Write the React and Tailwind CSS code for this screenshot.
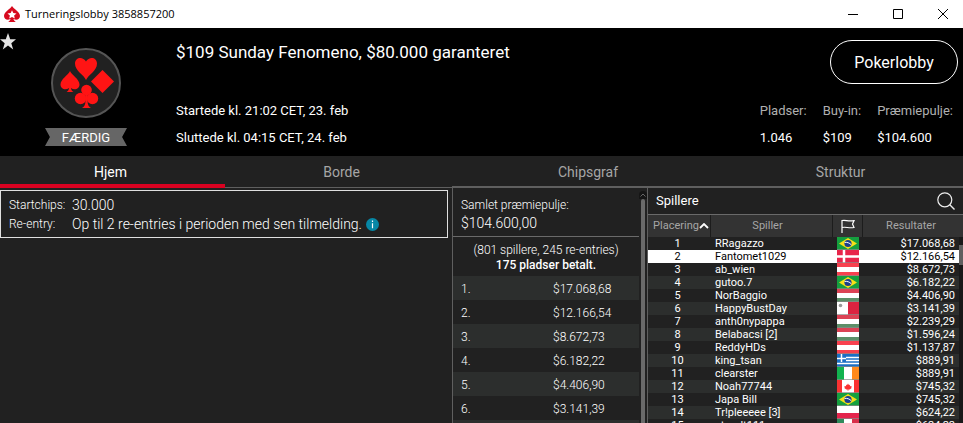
import React from 'react';

const tabs = ['Hjem', 'Borde', 'Chipsgraf', 'Struktur'];

const prizes = ['$17.068,68', '$12.166,54', '$8.672,73', '$6.182,22', '$4.406,90', '$3.141,39', '$2.239,29'];

const players = [
  { name: 'RRagazzo', flag: 'br', result: '$17.068,68' },
  { name: 'Fantomet1029', flag: 'dk', result: '$12.166,54' },
  { name: 'ab_wien', flag: 'at', result: '$8.672,73' },
  { name: 'gutoo.7', flag: 'br', result: '$6.182,22' },
  { name: 'NorBaggio', flag: 'hu', result: '$4.406,90' },
  { name: 'HappyBustDay', flag: 'mt', result: '$3.141,39' },
  { name: 'anth0nypappa', flag: 'hu', result: '$2.239,29' },
  { name: 'Belabacsi [2]', flag: 'hu', result: '$1.596,24' },
  { name: 'ReddyHDs', flag: 'at', result: '$1.137,87' },
  { name: 'king_tsan', flag: 'gr', result: '$889,91' },
  { name: 'clearster', flag: 'ie', result: '$889,91' },
  { name: 'Noah77744', flag: 'ca', result: '$745,32' },
  { name: 'Japa Bill', flag: 'br', result: '$745,32' },
  { name: 'Tr!pleeeee [3]', flag: 'pl', result: '$624,22' },
  { name: 'stroolt111', flag: 'mx', result: '$624,22' },
];

const flagArt = {
  br: (
    <>
      <rect width="22" height="13" fill="#159f3f" />
      <path d="M2 6.500 11 1l9 5.500-9 5.500z" fill="#f7e017" />
      <circle cx="11" cy="6.500" r="3.600" fill="#1c3f8c" />
      <path d="M7.600 5.400c2.600-.3 5 .5 6.700 2.400" stroke="#fff" strokeWidth="1" fill="none" />
    </>
  ),
  dk: (
    <>
      <rect width="22" height="13" fill="#e8254a" />
      <path d="M7 0v13M0 6.500h22" stroke="#fff" strokeWidth="2.500" />
    </>
  ),
  at: (
    <>
      <rect width="22" height="13" fill="#f8414f" />
      <rect y="4" width="22" height="5" fill="#fff" />
    </>
  ),
  hu: (
    <>
      <rect width="22" height="13" fill="#dc4355" />
      <rect y="4" width="22" height="5" fill="#fff" />
      <rect y="9" width="22" height="4" fill="#5c8f68" />
    </>
  ),
  mt: (
    <>
      <rect width="22" height="13" fill="#fff" />
      <rect x="11" width="11" height="13" fill="#db2340" />
      <circle cx="3.500" cy="3.500" r="1.800" fill="#999" />
    </>
  ),
  gr: (
    <>
      <rect width="22" height="13" fill="#1a6fc4" />
      <path d="M0 3.500h22M0 6.500h22M0 9.500h22" stroke="#fff" strokeWidth="1.300" />
      <rect width="9" height="8" fill="#1a6fc4" />
      <path d="M4.500 0v8M0 4.500h9" stroke="#fff" strokeWidth="1.500" />
    </>
  ),
  ie: (
    <>
      <rect width="22" height="13" fill="#fff" />
      <rect width="7" height="13" fill="#12b24f" />
      <rect x="15" width="7" height="13" fill="#ff8a1c" />
    </>
  ),
  ca: (
    <>
      <rect width="22" height="13" fill="#fff" />
      <rect width="5" height="13" fill="#fa3232" />
      <rect x="17" width="5" height="13" fill="#fa3232" />
      <path d="m11 3.500.9 1.500 1-.3v1.500l1.800-.2-.5 1.300.5.600-2 1.500h-1.300v1.300h-.800V9.400H9.300L7.300 7.900l.5-.6L7.300 6l1.800.2V4.700l1 .3z" fill="#fa3232" />
    </>
  ),
  pl: (
    <>
      <rect width="22" height="13" fill="#fff" />
      <rect y="7" width="22" height="6" fill="#e4244c" />
    </>
  ),
  mx: (
    <>
      <rect width="22" height="13" fill="#fff" />
      <rect width="7" height="13" fill="#2f8a5b" />
      <rect x="15" width="7" height="13" fill="#d8304a" />
      <circle cx="11" cy="6.500" r="2" fill="#9a7b52" />
    </>
  ),
};

const Flag = ({ code }) => (
  <svg viewBox="0 0 22 13" className="block h-[13px] w-[22px]" aria-hidden="true">
    {flagArt[code]}
    <path d="M0 12.500h22" stroke="#8a8a8a" strokeOpacity=".7" />
  </svg>
);

const TitleBar = () => (
  <div className="flex h-7 shrink-0 items-center justify-between bg-white text-black">
    <div className="flex items-center gap-[5px] pl-1">
      <svg viewBox="0 0 16 16" className="h-4 w-4" aria-hidden="true">
        <path d="M8 0C6.500 3 0 5.800 0 10c0 3.600 4 4.600 6.500 2.800-.2 1.300-.9 2.200-2.300 3.200h7.600c-1.400-1-2.100-1.900-2.300-3.200C12 14.600 16 13.600 16 10 16 5.800 9.500 3 8 0z" fill="#d70a1e" />
        <path d="m8 4.200 1.300 2.900 3.200.3-2.400 2.100.7 3.100L8 11l-2.800 1.600.7-3.100-2.400-2.100 3.200-.3z" fill="#fff" />
      </svg>
      <span className="font-['Open_Sans','Noto_Sans',sans-serif] text-[11px] leading-4">Turneringslobby 3858857200</span>
    </div>
    <div className="flex items-center gap-[5px]">
      <button aria-label="Minimer" className="flex h-7 w-10 items-center justify-center">
        <svg viewBox="0 0 10 10" className="h-2.5 w-2.5"><path d="M0 5.500h10" stroke="#000" /></svg>
      </button>
      <button aria-label="Maksimer" className="flex h-7 w-10 items-center justify-center">
        <svg viewBox="0 0 10 10" className="h-2.5 w-2.5"><path d="M.5.5h9v9h-9z" fill="none" stroke="#000" /></svg>
      </button>
      <button aria-label="Luk" className="flex h-7 w-10 items-center justify-center">
        <svg viewBox="0 0 10 10" className="h-2.5 w-2.5"><path d="m0 0 10 10M10 0 0 10" stroke="#000" /></svg>
      </button>
    </div>
  </div>
);

const Emblem = () => (
  <svg viewBox="0 0 70 70" className="h-[70px] w-[70px]" aria-hidden="true">
    <circle cx="35" cy="35" r="34" fill="#212121" stroke="#555" strokeWidth="2" />
    <g fill="#ff1414">
      <path d="M35 32C33 27 24 23 24 15.500 24 9 32 8 35 13.500 38 8 46 9 46 15.500 46 23 37 27 35 32z" />
      <path d="m51.500 22 11.500 11.500L51.500 45 40 33.500z" />
      <path d="M19 23c-1.500 4-9.500 8-9.500 13.500 0 4.500 5 6 8.500 3.500-.2 2-1 3.200-2.500 4h7c-1.500-.8-2.300-2-2.500-4 3.500 2.500 8.500 1 8.500-3.500C28.500 31 20.500 27 19 23z" />
      <circle cx="35.500" cy="42" r="5.300" />
      <circle cx="29.500" cy="50.500" r="5.700" />
      <circle cx="41.500" cy="50.500" r="5.700" />
      <path d="M34 44h3l-.5 9c.2 4 1.500 6 3.500 7h-9c2-1 3.300-3 3.500-7z" />
    </g>
  </svg>
);

const stats = [
  ['Pladser:', '1.046'],
  ['Buy-in:', '$109'],
  ['Præmiepulje:', '$104.600'],
];

const Header = () => (
  <header className="flex h-32 shrink-0 bg-black">
    <div className="flex w-44 shrink-0">
      <button aria-label="Favorit" className="mt-1 h-[18px] w-4">
        <svg viewBox="0 0 16 18" className="h-[18px] w-4">
          <path d="m8 1 2.200 6.200H16l-4.700 4 1.900 6.300L8 13.600l-5.200 3.900 1.900-6.300L0 7.200h5.800z" fill="#e4e4e4" />
        </svg>
      </button>
      <div className="flex w-[140px] flex-col items-center pt-5">
        <Emblem />
        <div className="mt-2.5 flex h-[18px] w-[82px] justify-center bg-[#666] text-[13px] leading-5 text-white [clip-path:polygon(0_0,100%_0,94%_50%,100%_100%,0_100%,6%_50%)]">
          FÆRDIG
        </div>
      </div>
    </div>
    <div className="flex flex-1 flex-col text-[13px] leading-4 text-white">
      <h1 className="mt-3 text-[17px] leading-6">$109 Sunday Fenomeno, $80.000 garanteret</h1>
      <p className="mt-[39px]">Startede kl. 21:02 CET, 23. feb</p>
      <p className="mt-[11px]">Sluttede kl. 04:15 CET, 24. feb</p>
    </div>
    <div className="flex flex-col items-end text-[13px] leading-4 text-white">
      <button className="mt-3 mr-[5px] h-11 w-32 rounded-full border border-white pt-0.5 text-base">Pokerlobby</button>
      <dl className="mt-[19px] mr-2.5 flex gap-4">
        {stats.map(([label, value]) => (
          <div key={label}>
            <dt className="text-[#b0b0b0]">{label}</dt>
            <dd className="mt-[11px]">{value}</dd>
          </div>
        ))}
      </dl>
    </div>
  </header>
);

const Tabs = () => (
  <nav className="grid h-[30px] shrink-0 grid-cols-[225fr_233fr_260fr_245fr] text-sm leading-6">
    {tabs.map((tab, i) => (
      <a
        key={tab}
        href="#"
        className={`flex items-center justify-center ${
          i === 0 ? 'border-b-4 border-[#d90221] pt-1 pr-1 text-white' : 'border-b border-[#5f5f5f] text-[#a6a6a6]'
        }`}
      >
        {tab}
      </a>
    ))}
  </nav>
);

const InfoPanel = () => (
  <section className="pt-1 pr-1">
    <dl className="grid h-12 grid-cols-[63px_1fr] content-center border border-[#e0e0e0] pt-0.5 pl-2 text-sm leading-[19px] font-light text-white">
      <dt className="text-xs leading-[19px]">Startchips:</dt>
      <dd>30.000</dd>
      <dt className="text-xs leading-[19px]">Re-entry:</dt>
      <dd className="flex items-center gap-1">
        Op til 2 re-entries i perioden med sen tilmelding.
        <svg viewBox="0 0 13 13" className="h-[13px] w-[13px]" aria-hidden="true">
          <circle cx="6.500" cy="6.500" r="6.500" fill="#0787a5" />
          <path d="M6.500 2.500v1.500M6.500 5.200v5" stroke="#fff" strokeWidth="1.200" />
        </svg>
      </dd>
    </dl>
  </section>
);

const PrizePanel = () => (
  <section className="flex min-h-0 overflow-hidden border-t border-l border-[#5f5f5f] font-light text-white">
    <div className="flex-1 overflow-y-auto [scrollbar-width:none]">
      <div className="flex h-[50px] flex-col justify-end border-b border-[#6a6a6a] pb-1 pl-2">
        <p className="text-xs leading-[18px]">Samlet præmiepulje:</p>
        <p className="text-sm leading-[18px]">$104.600,00</p>
      </div>
      <div className="flex h-[39px] flex-col items-center justify-center pt-0.5 text-xs leading-[15px]">
        <p>(801 spillere, 245 re-entries)</p>
        <p className="font-medium">175 pladser betalt.</p>
      </div>
      <table className="w-full text-xs">
        <tbody>
          {prizes.map((prize, i) => (
            <tr key={prize} className="h-6 odd:bg-[#2c2e2d]">
              <td className="w-[100px] pt-0.5 pl-2">{i + 1}.</td>
              <td className="pt-0.5">{prize}</td>
            </tr>
          ))}
        </tbody>
      </table>
    </div>
    <div className="flex w-2 flex-col items-center pt-1">
      <div className="flex h-2 w-2 items-center justify-center rounded-t bg-[#151515]">
        <svg viewBox="0 0 6 4" className="h-1 w-1.5"><path d="M.5 3.500 3 1l2.500 2.500" fill="none" stroke="#666" /></svg>
      </div>
      <div className="w-1 flex-1 rounded-t bg-[#6a6a6a]" />
    </div>
  </section>
);

const PlayerPanel = () => (
  <section className="flex min-h-0 flex-col overflow-hidden border-t border-l border-[#5f5f5f]">
    <div className="flex h-7 shrink-0 items-center justify-between border-b border-[#6a6a6a] px-2">
      <h2 className="text-[13px] text-white">Spillere</h2>
      <button aria-label="Søg">
        <svg viewBox="0 0 18 18" className="h-[18px] w-[18px]">
          <circle cx="7.800" cy="7.800" r="7" fill="none" stroke="#eee" strokeWidth="1.200" />
          <path d="m12.800 12.800 4.700 4.700" stroke="#eee" strokeWidth="1.400" />
        </svg>
      </button>
    </div>
    <div className="flex min-h-0 flex-1 overflow-y-auto [scrollbar-width:none]">
      <table className="w-full table-fixed border-separate border-spacing-0 self-start text-[11px] leading-3 text-white">
        <thead>
          <tr className="h-[22px] bg-[#333] text-[#a6a6a6] *:font-normal">
            <th className="w-[63px] border-r border-[#1c1c1c] pl-1">
              <span className="flex items-center justify-center">
                Placering
                <svg viewBox="0 0 10 6" className="h-1.5 w-2.5"><path d="m1 5 4-4 4 4" fill="none" stroke="#fff" strokeWidth="1.800" /></svg>
              </span>
            </th>
            <th className="border-r border-[#1c1c1c] pr-2">Spiller</th>
            <th className="w-[30px] border-r border-[#1c1c1c]" aria-label="Land">
              <svg viewBox="0 0 14 14" className="mx-auto h-3.5 w-3.5">
                <path d="M1 14V1.500c4-1 5 1.200 12 .2L11.500 5 13 8.500C7.500 9.500 5 7.500 1 8.500" fill="none" stroke="#fff" strokeWidth="1.200" />
              </svg>
            </th>
            <th className="w-24">Resultater</th>
          </tr>
        </thead>
        <tbody>
          {players.map((p, i) => (
            <tr key={p.name} className={`h-[13px] ${i === 1 ? 'bg-white text-black' : 'even:bg-[#2c2e2d]'}`}>
              <td className="pt-px pr-1 text-center">{i + 1}</td>
              <td className="truncate pt-px pl-1">{p.name}</td>
              <td className="pl-1"><Flag code={p.flag} /></td>
              <td className="pt-px pr-1 text-right">{p.result}</td>
            </tr>
          ))}
        </tbody>
      </table>
      <div className="flex w-1 shrink-0 flex-col bg-[#191919]">
        <div className="h-[22px] bg-[#333]" />
        <div className="mt-2 h-5 bg-[#5f5f5f]" />
      </div>
    </div>
  </section>
);

const App = () => {
  return (
    <div className="flex h-screen flex-col overflow-hidden bg-[#212121] font-[Roboto,'Liberation_Sans',sans-serif]">
      <TitleBar />
      <Header />
      <Tabs />
      <main className="grid min-h-0 flex-1 grid-cols-[452fr_195fr_316fr] grid-rows-1">
        <InfoPanel />
        <PrizePanel />
        <PlayerPanel />
      </main>
    </div>
  );
};

export default App;
